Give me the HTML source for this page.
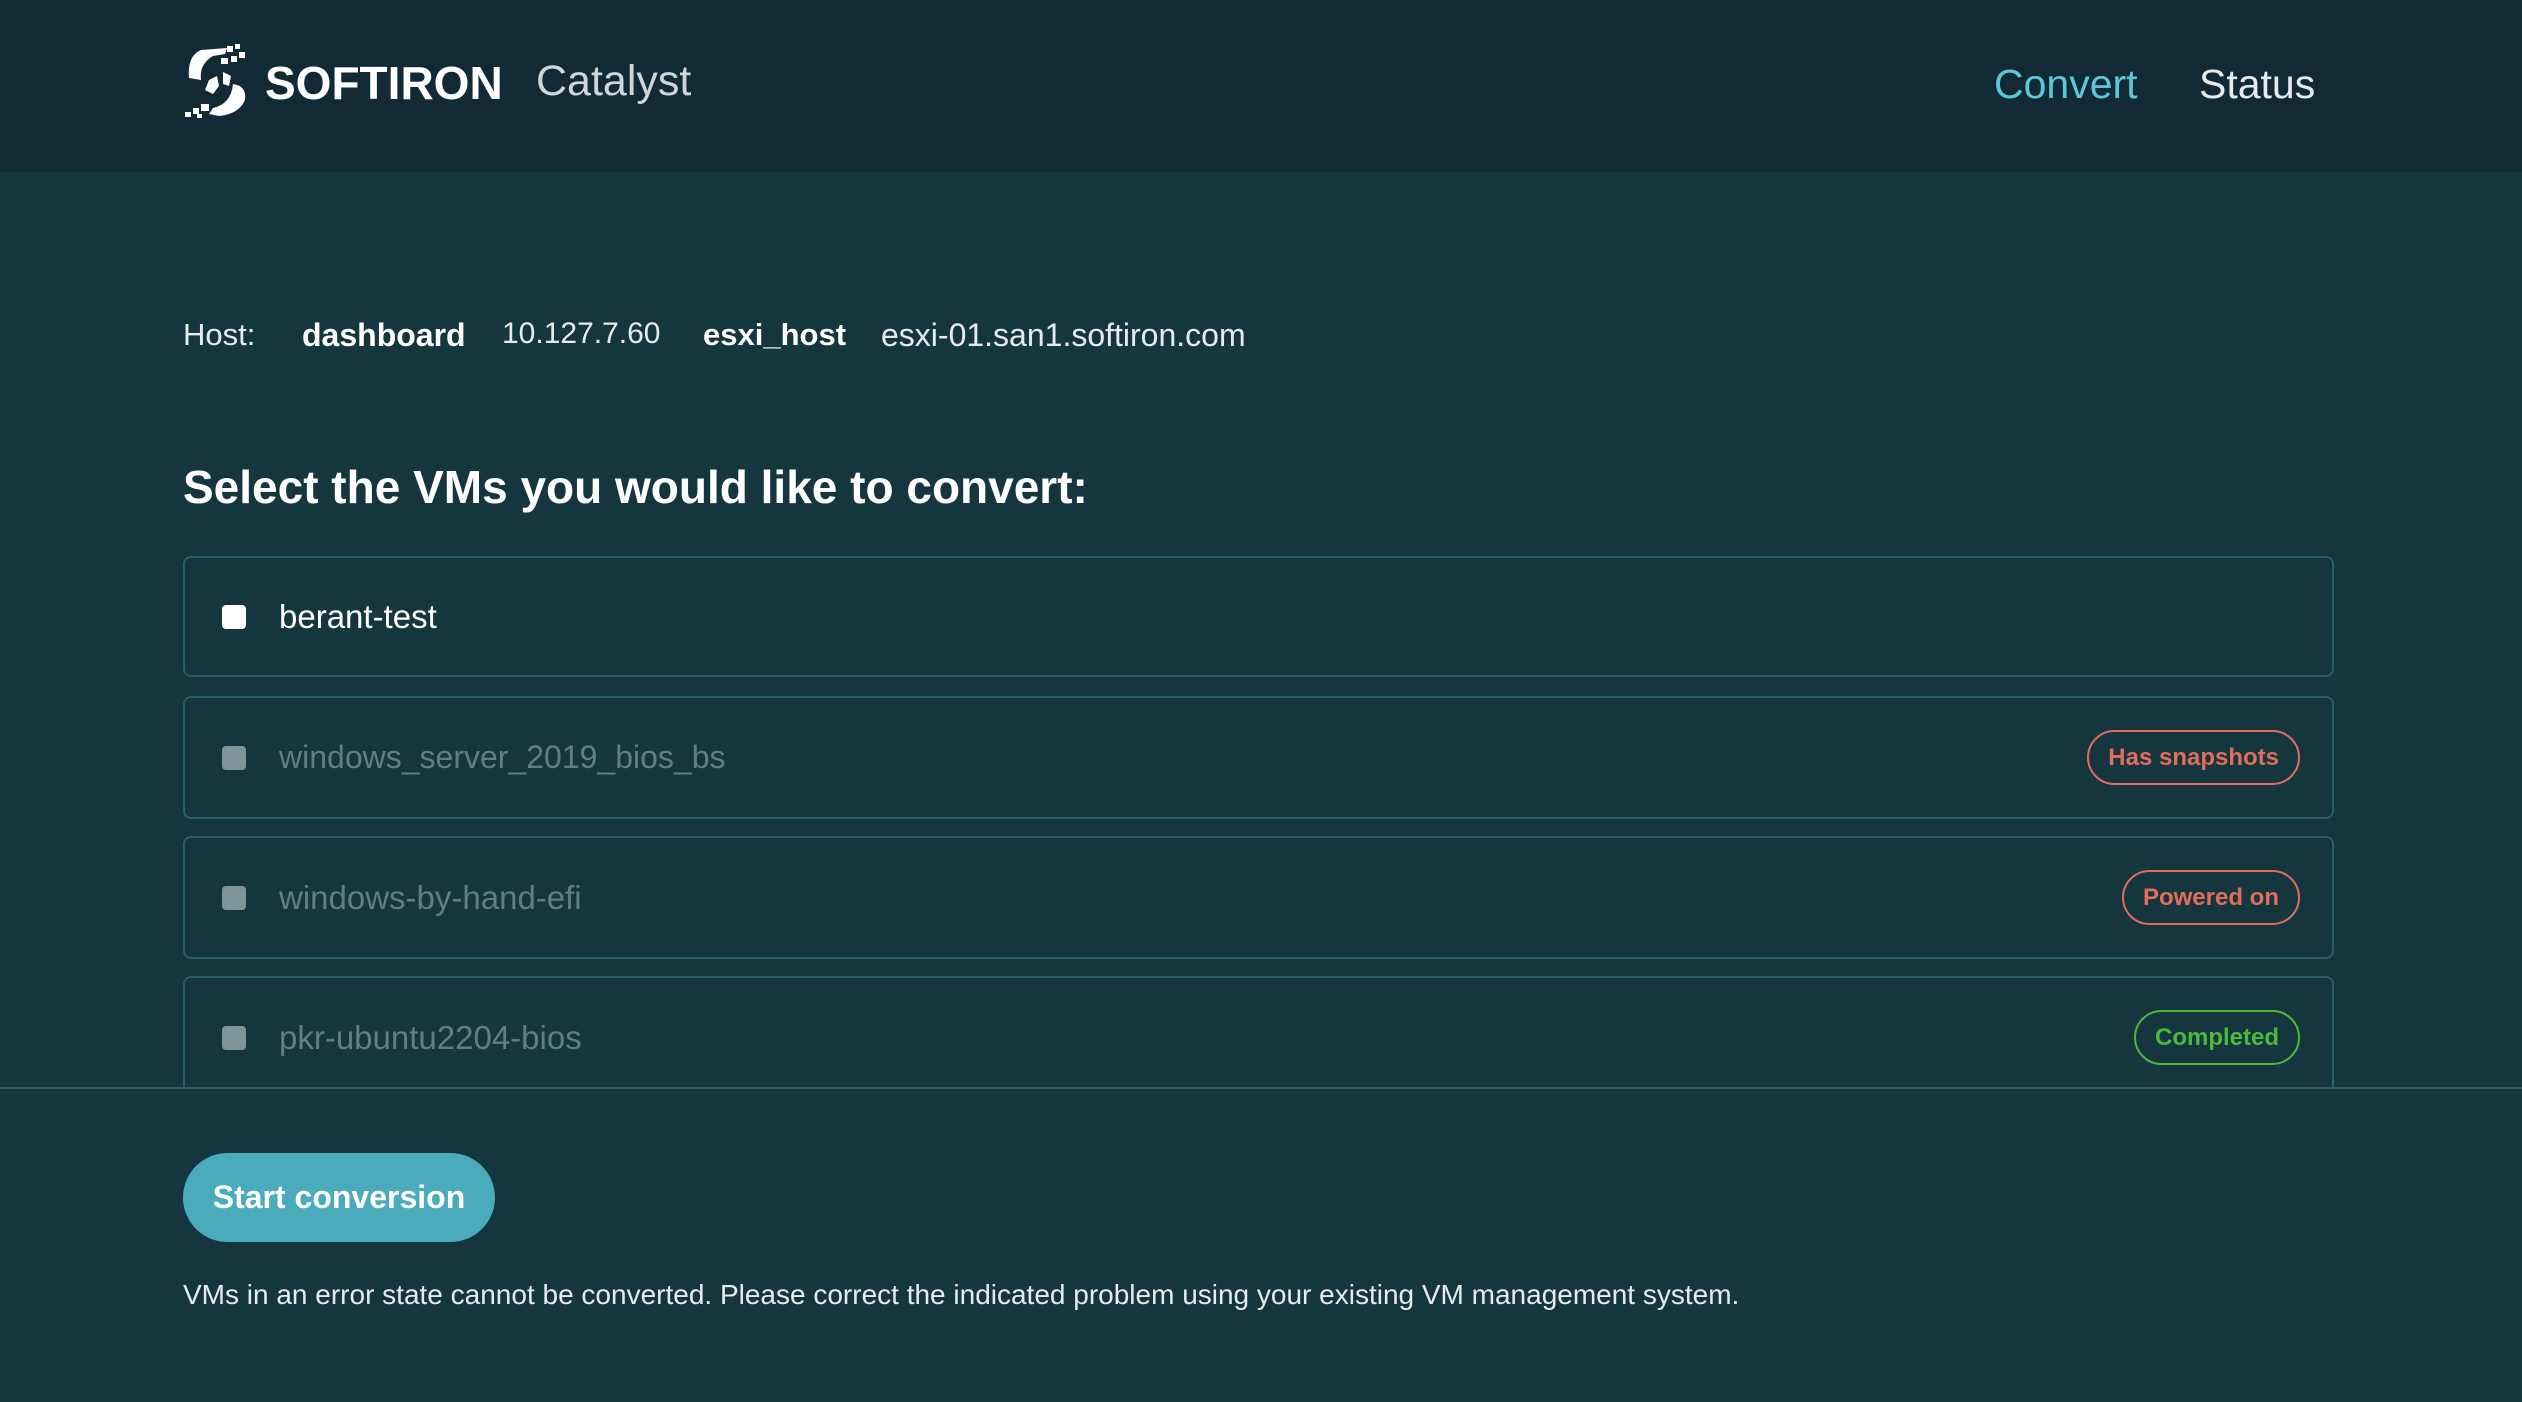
<!DOCTYPE html>
<html><head><meta charset="utf-8"><style>
*{box-sizing:border-box;margin:0;padding:0}
html,body{width:2522px;height:1402px;overflow:hidden;background:#15363f;font-family:"Liberation Sans",sans-serif;color:#fff}
.hdr{position:absolute;left:0;top:0;width:2522px;height:172px;background:#112a35}
.abs{position:absolute;white-space:nowrap}
.row{position:absolute;left:183px;width:2151px;border:2px solid #2a5f63;border-radius:8px}
.cb{position:absolute;left:37px;width:24px;height:24px;border-radius:4px;background:#7d9598}
.nm{position:absolute;left:94px;font-size:32px;color:#5f7f83}
.badge{position:absolute;right:32px;height:55px;border:2px solid #e06e5b;border-radius:28px;color:#e06e5b;font-size:24px;font-weight:bold;line-height:51px;padding:0 19px}
</style></head><body>
<div class="hdr">
<svg class="abs" style="left:183px;top:44px" width="68" height="74" viewBox="0 0 68 74">
<path d="M18 6 Q4 12 6 34 L18 36 Q16 20 30 12 L42 10 L44 4 Z" fill="#fff"/>
<rect x="44" y="2" width="6" height="6" fill="#fff"/><rect x="52" y="0" width="5" height="5" fill="#fff"/><rect x="56" y="8" width="6" height="6" fill="#fff"/><rect x="48" y="12" width="6" height="6" fill="#fff"/><rect x="38" y="14" width="7" height="6" fill="#fff"/>
<path d="M50 40 Q64 42 62 56 Q56 70 36 72 L26 70 L30 64 Q48 60 50 40 Z" fill="#fff"/>
<rect x="18" y="60" width="8" height="7" fill="#fff"/><rect x="10" y="64" width="6" height="6" fill="#fff"/><rect x="2" y="68" width="6" height="5" fill="#fff"/><rect x="14" y="70" width="5" height="4" fill="#fff"/>
<path d="M26 36 L34 32 L36 42 L30 50 L22 46 Z" fill="#fff"/><path d="M40 28 L48 32 L46 42 L40 40 Z" fill="#fff"/>
</svg>
<div class="abs" style="left:265px;top:56px;font-size:46px;font-weight:bold">SOFTIRON</div>
<div class="abs" style="left:536px;top:57px;font-size:43px;color:#cfd6d8">Catalyst</div>
<div class="abs" style="left:1994px;top:61px;font-size:41px;color:#5bc8d8">Convert</div>
<div class="abs" style="left:2199px;top:61px;font-size:41px;color:#e6ecee">Status</div>
</div>
<div class="abs" style="top:317px;left:183px;font-size:31px;color:#e6ecee">Host:</div>
<div class="abs" style="top:317px;left:302px;font-size:32px;font-weight:bold">dashboard</div>
<div class="abs" style="top:317px;left:502px;font-size:30px;color:#e6ecee">10.127.7.60</div>
<div class="abs" style="top:317px;left:703px;font-size:31px;font-weight:bold">esxi_host</div>
<div class="abs" style="top:317px;left:881px;font-size:32px;color:#e6ecee">esxi-01.san1.softiron.com</div>
<div class="abs" style="top:460px;left:183px;font-size:46px;font-weight:bold">Select the VMs you would like to convert:</div>
<div class="row" style="top:556px;height:121px"><div class="cb" style="top:47px;background:#fff"></div><div class="nm" style="top:40px;color:#fff;font-size:33px">berant-test</div></div>
<div class="row" style="top:696px;height:123px"><div class="cb" style="top:48px"></div><div class="nm" style="top:41px">windows_server_2019_bios_bs</div><div class="badge" style="top:32px">Has snapshots</div></div>
<div class="row" style="top:836px;height:123px"><div class="cb" style="top:48px"></div><div class="nm" style="top:41px;font-size:33px">windows-by-hand-efi</div><div class="badge" style="top:32px">Powered on</div></div>
<div class="row" style="top:976px;height:140px"><div class="cb" style="top:48px"></div><div class="nm" style="top:41px;font-size:33px">pkr-ubuntu2204-bios</div><div class="badge" style="top:32px;border-color:#4cb93c;color:#4cb93c">Completed</div></div>
<div class="abs" style="left:0;top:1087px;width:2522px;height:315px;background:#15363f;border-top:2px solid #2a5f63"></div>
<div class="abs" style="left:183px;top:1153px;width:312px;height:89px;border-radius:45px;background:#4aabbd;font-size:32px;font-weight:bold;text-align:center;line-height:89px">Start conversion</div>
<div class="abs" style="left:183px;top:1279px;font-size:28px;color:#e6ecee">VMs in an error state cannot be converted. Please correct the indicated problem using your existing VM management system.</div>
</body></html>
